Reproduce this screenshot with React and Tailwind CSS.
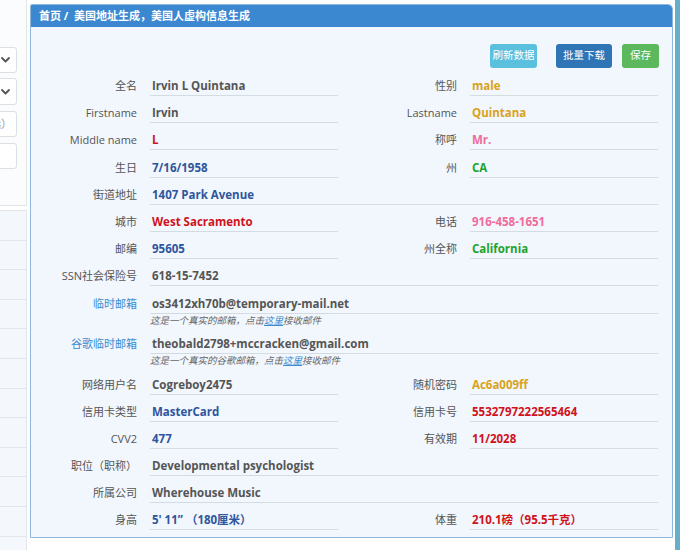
import React from 'react';

const FONT = { fontFamily: '"Open Sans", "Noto Sans CJK SC", sans-serif' };

const Label = ({ children, w, blue }) => (
  <div
    className={
      w +
      ' shrink-0 pt-[4px] pr-[13px] text-right text-[11px] leading-[18px] whitespace-nowrap ' +
      (blue ? 'text-[#3a8bd0]' : 'text-[#555]')
    }
  >
    {children}
  </div>
);

const Value = ({ children, color, w }) => (
  <div
    className={
      w +
      ' h-[23px] shrink-0 pt-[4px] pl-[2px] border-b border-[#d3dbe3] text-[11.5px] font-bold leading-[18px] whitespace-nowrap ' +
      color
    }
  >
    {children}
  </div>
);

const HalfRow = ({ l, r }) => (
  <div className="flex h-[27.2px]">
    <Label w="w-[119px]">{l[0]}</Label>
    <Value w="w-[188px]" color={l[2]}>{l[1]}</Value>
    {r ? (
      <>
        <Label w="w-[132px]">{r[0]}</Label>
        <Value w="w-[188px]" color={r[2]}>{r[1]}</Value>
      </>
    ) : (
      <div className="w-[320px] h-[23px] border-b border-[#d3dbe3]" />
    )}
  </div>
);

const FullRow = ({ label, value, color }) => (
  <div className="flex h-[27.2px]">
    <Label w="w-[119px]">{label}</Label>
    <Value w="w-[508px]" color={color}>{value}</Value>
  </div>
);

const MailRow = ({ label, value, kind }) => (
  <div className="flex h-[40.5px]">
    <Label w="w-[119px]" blue>{label}</Label>
    <div className="w-[508px]">
      <Value w="w-[508px]" color="text-[#555]">{value}</Value>
      <div className="text-[9.5px] italic leading-[14px] text-[#666]">
        这是一个真实的{kind}，点击<span className="text-[#3a8bd0] underline">这里</span>接收邮件
      </div>
    </div>
  </div>
);

const gray = 'text-[#555]';
const gold = 'text-[#d9a21b]';
const red = 'text-[#d0121b]';
const pink = 'text-[#ef6b9a]';
const blue = 'text-[#2f559c]';
const green = 'text-[#1fa32a]';

const Chevron = () => (
  <svg width="9" height="6" viewBox="0 0 9 6" fill="none">
    <path d="M1 1l3.5 3.5L8 1" stroke="#555" strokeWidth="1.8" strokeLinecap="round" strokeLinejoin="round" />
  </svg>
);

const Sidebar = () => (
  <div className="w-[27px] shrink-0 overflow-hidden">
    <div className="ml-[-173px] w-[200px]">
      <div className="h-[206px] border-r border-b border-[#e2e6ea] bg-[#fafcfe] pt-[47px] pr-[9px] pl-[10px]">
        <div className="h-[26px] mb-[5px] rounded-[3px] border border-[#dcdfe3] bg-white flex items-center justify-end pr-[6px]">
          <Chevron />
        </div>
        <div className="h-[27px] mb-[6px] rounded-[3px] border border-[#dcdfe3] bg-white flex items-center justify-end pr-[6px]">
          <Chevron />
        </div>
        <div className="h-[26px] mb-[6px] rounded-[3px] border border-[#dcdfe3] bg-white flex items-center justify-end pr-[4px] text-[11px] text-[#999] whitespace-nowrap">
          请输入城市（可选）
        </div>
        <div className="h-[26px] rounded-[3px] border border-[#dcdfe3] bg-white" />
      </div>
      <div className="mt-[4px] border-r border-t border-[#e2e6ea] bg-[#f4f8fc]">
        {Array.from({ length: 12 }).map((_, i) => (
          <div key={i} className="h-[29.6px] border-b border-[#e2e6ea]" />
        ))}
      </div>
    </div>
  </div>
);

export default function App() {
  return (
    <div className="w-[680px] h-[550px] bg-white flex overflow-hidden" style={FONT}>
      <Sidebar />
      <div className="ml-[3px] mt-[4px] w-[643px] h-[534px] shrink-0 border border-[#8fb8de] rounded-tr-[5px] rounded-tl-[2px] bg-[#f1f7fd] overflow-hidden">
        <div className="h-[22px] bg-[#3b88d0] pl-[8px] text-[11px] font-bold leading-[22px] text-white">
          首页 / &nbsp;美国地址生成，美国人虚构信息生成
        </div>
        <div className="pt-[17px]">
          <div className="flex justify-end pr-[13px] h-[24px] mb-[5px] text-[10.5px] text-white">
            <div className="w-[47px] rounded-[3px] bg-[#5bc0de] flex items-center justify-center">刷新数据</div>
            <div className="ml-[19px] w-[56px] rounded-[3px] bg-[#2f74b5] flex items-center justify-center">批量下载</div>
            <div className="ml-[10px] w-[37px] rounded-[3px] bg-[#5cb85c] flex items-center justify-center">保存</div>
          </div>
          <HalfRow l={['全名', 'Irvin L Quintana', gray]} r={['性别', 'male', gold]} />
          <HalfRow l={['Firstname', 'Irvin', gray]} r={['Lastname', 'Quintana', gold]} />
          <HalfRow l={['Middle name', 'L', red]} r={['称呼', 'Mr.', pink]} />
          <HalfRow l={['生日', '7/16/1958', blue]} r={['州', 'CA', green]} />
          <FullRow label="街道地址" value="1407 Park Avenue" color={blue} />
          <HalfRow l={['城市', 'West Sacramento', red]} r={['电话', '916-458-1651', pink]} />
          <HalfRow l={['邮编', '95605', blue]} r={['州全称', 'California', green]} />
          <FullRow label="SSN社会保险号" value="618-15-7452" color={gray} />
          <MailRow label="临时邮箱" value="os3412xh70b@temporary-mail.net" kind="邮箱" />
          <MailRow label="谷歌临时邮箱" value="theobald2798+mccracken@gmail.com" kind="谷歌邮箱" />
          <HalfRow l={['网络用户名', 'Cogreboy2475', gray]} r={['随机密码', 'Ac6a009ff', gold]} />
          <HalfRow l={['信用卡类型', 'MasterCard', blue]} r={['信用卡号', '5532797222565464', red]} />
          <HalfRow l={['CVV2', '477', blue]} r={['有效期', '11/2028', red]} />
          <FullRow label="职位（职称）" value="Developmental psychologist" color={gray} />
          <FullRow label="所属公司" value="Wherehouse Music" color={gray} />
          <HalfRow l={['身高', '5\' 11” （180厘米）', blue]} r={['体重', '210.1磅（95.5千克）', red]} />
        </div>
      </div>
      <div className="ml-[2px] w-[5px] shrink-0 bg-[#67aecb]" />
    </div>
  );
}
